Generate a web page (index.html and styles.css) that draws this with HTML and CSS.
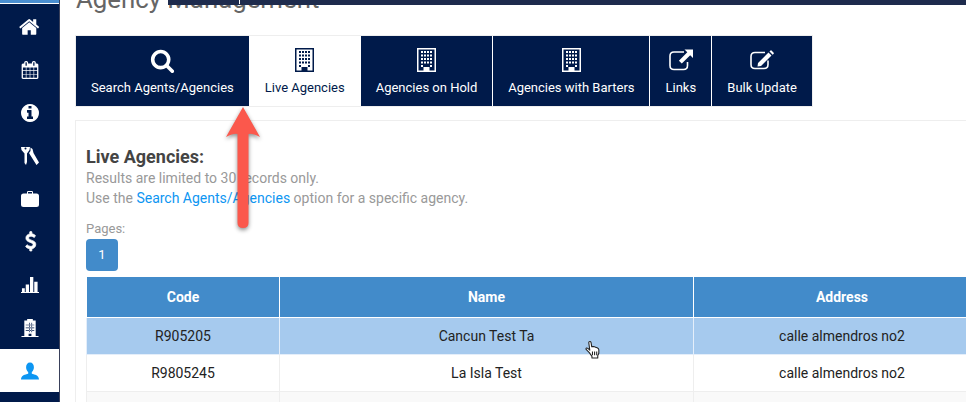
FILE: index.html
```html
<!DOCTYPE html>
<html lang="en">
  <head>
    <meta charset="UTF-8" />
    <title>Agency Management</title>
    <link rel="stylesheet" href="styles.css">
  </head>
  <body>
    <svg class="defs" aria-hidden="true">
      <symbol id="office" viewBox="0 0 19 24">
        <path fill="currentColor" fill-rule="evenodd" d="M0 0h19v24H0zM1.500 1.500v21h5v-3.500h6v3.500h5v-21z" />
        <path fill="currentColor" d="M4 3h2v2H4zM7 3h2v2H7zM10 3h2v2h-2zM13 3h2v2h-2zM4 6.500h2v2H4zM7 6.500h2v2H7zM10 6.500h2v2h-2zM13 6.500h2v2h-2zM4 10h2v2H4zM7 10h2v2H7zM10 10h2v2h-2zM13 10h2v2h-2zM4 13.500h2v2H4zM7 13.500h2v2H7zM10 13.500h2v2h-2zM13 13.500h2v2h-2zM4 17h2v2H4zM13 17h2v2h-2z" />
      </symbol>
    </svg>

    <div class="topbar"><span></span></div>

    <nav class="sidebar">
      <a href="#">
        <svg class="fa home" viewBox="0 0 1792 1792"><path d="M1408 992v480q0 26-19 45t-45 19h-384v-384h-256v384h-384q-26 0-45-19t-19-45v-480q0-1 .5-3t.5-3l575-474 575 474q1 2 1 6zm223-69l-62 74q-8 9-21 11h-3q-13 0-21-7l-692-577-692 577q-12 8-24 7-13-2-21-11l-62-74q-8-10-7-23.500t11-21.500l719-599q32-26 76-26t76 26l244 204v-195q0-14 9-23t23-9h192q14 0 23 9t9 23v408l219 182q10 8 11 21.500t-7 23.500z" /></svg>
      </a>
      <a href="#">
        <svg class="fa" viewBox="0 0 1792 1792"><path d="M192 1664h288v-288h-288v288zm352 0h320v-288h-320v288zm-352-352h288v-320h-288v320zm352 0h320v-320h-320v320zm-352-384h288v-288h-288v288zm736 736h320v-288h-320v288zm-384-736h320v-288h-320v288zm768 736h288v-288h-288v288zm-384-352h320v-320h-320v320zm-352-864v-288q0-13-9.500-22.500t-22.500-9.500h-64q-13 0-22.500 9.500t-9.500 22.500v288q0 13 9.500 22.500t22.500 9.500h64q13 0 22.500-9.500t9.500-22.500zm736 864h288v-320h-288v320zm-384-384h320v-288h-320v288zm384 0h288v-288h-288v288zm32-480v-288q0-13-9.500-22.500t-22.500-9.500h-64q-13 0-22.500 9.500t-9.500 22.500v288q0 13 9.500 22.500t22.500 9.500h64q13 0 22.500-9.500t9.500-22.500zm384-64v1280q0 52-38 90t-90 38h-1408q-52 0-90-38t-38-90v-1280q0-52 38-90t90-38h128v-96q0-66 47-113t113-47h64q66 0 113 47t47 113v96h384v-96q0-66 47-113t113-47h64q66 0 113 47t47 113v96h128q52 0 90 38t38 90z" /></svg>
      </a>
      <a href="#">
        <svg class="fa" viewBox="128 128 1536 1536"><path d="M1152 1376v-160q0-14-9-23t-23-9h-96v-512q0-14-9-23t-23-9h-320q-14 0-23 9t-9 23v160q0 14 9 23t23 9h96v320h-96q-14 0-23 9t-9 23v160q0 14 9 23t23 9h448q14 0 23-9t9-23zm-128-896v-160q0-14-9-23t-23-9h-192q-14 0-23 9t-9 23v160q0 14 9 23t23 9h192q14 0 23-9t9-23zm640 416q0 209-103 385.500t-279.500 279.500-385.500 103-385.500-103-279.500-279.500-103-385.500 103-385.500 279.500-279.500 385.500-103 385.500 103 279.500 279.500 103 385.500z" /></svg>
      </a>
      <a href="#">
        <svg class="fa" viewBox="0 0 18 18"><path fill-rule="evenodd" d="M0 0h9l-.5 3L6 6.500V15l-1 3-1.500-2V6.500L.5 3zM3.500 1.500a1 1 0 1 0 2 0 1 1 0 1 0-2 0z" /><path d="M9.500.5l2 1.500 1 4 5.500 9.500-2.500 2.500-6-9.500-1.500-2.500 1.500-2z" /></svg>
      </a>
      <a href="#">
        <svg class="fa" viewBox="0 0 18 16"><path fill-rule="evenodd" d="M6 2.500V1.200Q6 0 7.200 0h3.600Q12 0 12 1.200v1.300h3.500q2.500 0 2.500 2.500v8.500q0 2.500-2.500 2.500h-13Q0 16 0 13.500V5q0-2.500 2.500-2.500zM7 2.500h4V1H7z" /></svg>
      </a>
      <a href="#">
        <svg class="fa dollar" viewBox="280 128 1100 1664"><path d="M1362 1185q0 153-99.500 263.500t-258.500 136.500v175q0 14-9 23t-23 9h-135q-13 0-22.500-9.500t-9.500-22.500v-175q-66-9-127.500-31t-101.500-44.500-74-48-46.500-37.500-17.500-18q-17-21-2-41l103-135q7-10 23-12 15-2 24 9l2 2q113 99 243 125 37 8 74 8 81 0 142.500-43t61.500-122q0-28-15-53t-33.500-42-58.500-37.500-66-32-80-32.500q-39-16-61.500-25t-61.500-26.500-62.500-31-56.500-35.500-53.500-42.500-43.500-49-35.500-58-21-66.500-8.500-78q0-138 98-242t255-134v-180q0-13 9.500-22.500t22.500-9.500h135q14 0 23 9t9 23v176q57 6 110.500 23t87 33.500 63.500 37.500 39 29 15 14q17 18 5 38l-81 146q-8 15-23 16-14 3-27-7-3-3-14.500-12t-39-26.500-58.500-32-74.500-26-85.500-11.500q-95 0-155 43t-60 111q0 26 8.500 48t29.500 41.500 39.500 33 56 31 60.500 27 70 27.500q53 20 81 31.500t76 35 75.500 42.500 62 50 53 63.500 31.500 76.500 13 94z" /></svg>
      </a>
      <a href="#">
        <svg class="fa" viewBox="0 0 19 17"><path d="M1 12h3v4H1zM5 8h3.500v8H5zM9.500 0H13v16H9.500zM14 5h3.500v11H14zM0 16h19v1H0z" /></svg>
      </a>
      <a href="#">
        <svg class="fa" viewBox="0 0 18 19"><path fill-rule="evenodd" d="M6 0h6v1.500h3V18h3v1H0v-1h3V1.500h3zM4.500 6v.7h9V6zM4.500 9v.7h9V9zM4.500 12v.7h9V12zM8 4v10h.7V4zM10.500 4v10h.7V4zM7.500 15.500V18h3v-2.500z" /></svg>
      </a>
      <a href="#" class="active">
        <svg class="fa" viewBox="0 0 17 16"><path d="M8.500 0C11 0 12.200 2 12.200 4.500c0 2-.9 3.600-2 4.500v1.500C13 11.200 17 12 17 16H0c0-4 4-4.800 6.800-5.500V9c-1.100-.9-2-2.500-2-4.500C4.800 2 6 0 8.500 0z" /></svg>
      </a>
    </nav>

    <main>
      <h1>Agency Management</h1>

      <div class="tabs">
        <a href="#" class="tab">
          <svg class="fa" viewBox="0 0 1792 1792"><path d="M1216 832q0-185-131.500-316.500t-316.500-131.500-316.500 131.500-131.500 316.500 131.500 316.500 316.500 131.500 316.500-131.500 131.500-316.500zm512 832q0 52-38 90t-90 38q-54 0-90-38l-343-342q-179 124-399 124-143 0-273.500-55.500t-225-150-150-225-55.500-273.500 55.500-273.500 150-225 225-150 273.500-55.500 273.500 55.500 225 150 150 225 55.500 273.500q0 220-124 399l343 343q37 37 37 90z" /></svg>
          Search Agents/Agencies
        </a>
        <a href="#" class="tab current">
          <svg class="office"><use href="#office" /></svg>
          Live Agencies
        </a>
        <a href="#" class="tab">
          <svg class="office"><use href="#office" /></svg>
          Agencies on Hold
        </a>
        <a href="#" class="tab tab-barters">
          <svg class="office"><use href="#office" /></svg>
          Agencies with Barters
        </a>
        <a href="#" class="tab tab-links">
          <svg class="line" viewBox="0 0 24 21"><path d="M15 2.500H5Q1 2.500 1 6.500v9.500q0 4 4 4h9.500q4 0 4-4v-3.500" /><path class="solid" d="M15.500 0H24v8.500l-2.800-2.800-8.400 8.400-2.900-2.900 8.400-8.400z" /></svg>
          Links
        </a>
        <a href="#" class="tab">
          <svg class="line" viewBox="0 0 24 19"><path d="M15 2H5Q1 2 1 6v8q0 4 4 4h9q4 0 4-4v-4" /><path class="solid" d="M8 12.500L18.500 2l3 3L11 15.500l-3.500.5zM19.500 1l1-1q.5-.3 1 0l2.200 2.200q.3.500 0 1l-1 1z" /></svg>
          Bulk Update
        </a>
      </div>

      <section class="panel">
        <h2>Live Agencies:</h2>
        <p>Results are limited to 30 records only.</p>
        <p>Use the <a href="#">Search Agents/Agencies</a> option for a specific agency.</p>
        <p class="pages-label">Pages:</p>
        <button type="button" class="page">1</button>

        <table>
          <colgroup>
            <col class="col-code" />
            <col class="col-name" />
            <col class="col-address" />
          </colgroup>
          <thead>
            <tr>
              <th>Code</th>
              <th>Name</th>
              <th>Address</th>
            </tr>
          </thead>
          <tbody>
            <tr class="hover">
              <td>R905205</td>
              <td>Cancun Test Ta</td>
              <td>calle almendros no2</td>
            </tr>
            <tr>
              <td>R9805245</td>
              <td>La Isla Test</td>
              <td>calle almendros no2</td>
            </tr>
            <tr class="striped">
              <td></td>
              <td></td>
              <td></td>
            </tr>
          </tbody>
        </table>
      </section>
    </main>

    <svg class="arrow" viewBox="0 0 44 130" aria-hidden="true">
      <path d="M22 2L39 32 Q31 28 27.500 29V118q0 5-5.500 5t-5.500-5V29Q13 28 5 32z" />
    </svg>

    <svg class="pointer" viewBox="0 0 15 17" aria-hidden="true">
      <path d="M3.500 1.500q0-1 1-1t1.200 1l.6 4 .6-.4 1 .2 1 .2 1 .3 1.500.5q1.600.6 1.600 2v3.200l-1 2.200v2.300H6.500v-1.500L4 11 1 8q-.5-1 .5-1.300 1-.2 3 2z" fill="#fff" stroke="#222" stroke-width="1" stroke-linejoin="round" />
      <path d="M7 10v3.500M9 10v3.500M11 10v3.500" stroke="#222" stroke-width="1" />
    </svg>
  </body>
</html>
```

FILE: styles.css
```css
/* Global styles */
* {
  margin: 0;
  padding: 0;
  box-sizing: border-box;
}
html,
body {
  height: 402px;
  overflow: hidden;
}
body {
  display: flex;
  color: #222;
  font: 400 14px/20px "Roboto", sans-serif;
  background: #fff;
}
a {
  color: inherit;
  text-decoration: none;
}
.defs {
  display: none;
}
.fa {
  fill: currentColor;
}

/* Top bar, lies over the scrolled title */
.topbar {
  position: absolute;
  top: 0;
  left: 168px;
  right: 0;
  height: 5px;
  background: #1e2b4d;
  z-index: 2;
}
.topbar span {
  display: block;
  width: 1px;
  height: 4px;
  margin-left: 71px;
  background: #fff;
}

/* Sidebar */
.sidebar {
  flex: 0 0 60px;
  display: flex;
  flex-direction: column;
  padding-top: 5px;
  color: #fff;
  background: linear-gradient(#4a8fd0 3px, #fff 3px, #fff 4px, #001a4a 4px);
  border-right: 1px solid #39405a;
}
.sidebar a {
  height: 43px;
  display: flex;
  align-items: center;
  justify-content: center;
}
.sidebar .fa {
  width: 18px;
  height: 18px;
}
.sidebar .fa.home {
  width: 22px;
  height: 22px;
}
.sidebar .fa.dollar {
  stroke: currentColor;
  stroke-width: 70px;
  overflow: visible;
}
.sidebar a.active {
  color: #0d96f2;
  background: #fff;
}

/* Content */
main {
  flex: 1;
  min-width: 0;
  overflow: hidden;
  padding-left: 15px;
}
h1 {
  height: 35px;
  color: #666;
  font-size: 25.8px;
  font-weight: 400;
  line-height: 35px;
  transform: translateY(-18px);
  white-space: nowrap;
  padding-left: 1px;
}

/* Tabs */
.tabs {
  display: inline-flex;
  gap: 1px;
  height: 72px;
  border: 1px solid #eee;
  vertical-align: top;
}
.tab {
  display: flex;
  flex-direction: column;
  align-items: center;
  justify-content: flex-end;
  height: 70px;
  padding: 0 15px 8px;
  gap: 6px;
  color: #fff;
  font-size: 13px;
  white-space: nowrap;
  background: #001a4a;
}
.tab-barters {
  width: 156px;
  padding-left: 0;
  padding-right: 0;
}
.tab-links {
  width: 61px;
  padding-left: 0;
  padding-right: 0;
}
.tab.current {
  color: #001a4a;
  background: #fff;
}
.tab .fa {
  width: 25px;
  height: 25px;
  margin-bottom: -1px;
}
.tab .office {
  width: 19px;
  height: 24px;
}
.tab .line {
  width: 24px;
  height: 24px;
  fill: none;
  stroke: currentColor;
  stroke-width: 1.6px;
}
.tab .line .solid {
  fill: currentColor;
  stroke: none;
}

/* Panel */
.panel {
  width: 1000px;
  height: 400px;
  margin-top: 13px;
  padding: 25px 10px 0;
  color: #999;
  border: 1px solid #eee;
}
.panel h2 {
  color: #444;
  font-size: 18px;
  font-weight: 700;
  line-height: 22px;
}
.panel p a {
  color: #0d96f2;
}
.panel .pages-label {
  margin-top: 11px;
  font-size: 13px;
}
.page {
  display: block;
  width: 32px;
  height: 32px;
  border: none;
  border-radius: 4px;
  color: #fff;
  font: inherit;
  font-size: 13px;
  background: #428bca;
}

/* Table */
table {
  width: 904px;
  margin-top: 6px;
  table-layout: fixed;
  border-collapse: collapse;
  color: #222;
  text-align: center;
}
.col-code {
  width: 193px;
}
.col-name {
  width: 414px;
}
.col-address {
  width: 297px;
}
th {
  height: 40px;
  color: #fff;
  font-weight: 700;
  background: #428bca;
  border: 1px solid #fff;
  border-top: none;
}
td {
  height: 37px;
  border: 1px solid #eee;
}
.hover td {
  background: #a6caee;
  border-color: #e4eefa;
}
.striped td {
  background: #f9f9f9;
}

/* Annotation over the screenshot */
.arrow {
  position: absolute;
  left: 221px;
  top: 105px;
  width: 44px;
  height: 130px;
  fill: #fb584c;
  filter: drop-shadow(0 2px 2px rgba(0, 0, 0, 0.45));
}
.pointer {
  position: absolute;
  left: 585px;
  top: 341px;
  width: 16px;
  height: 18px;
}
```
